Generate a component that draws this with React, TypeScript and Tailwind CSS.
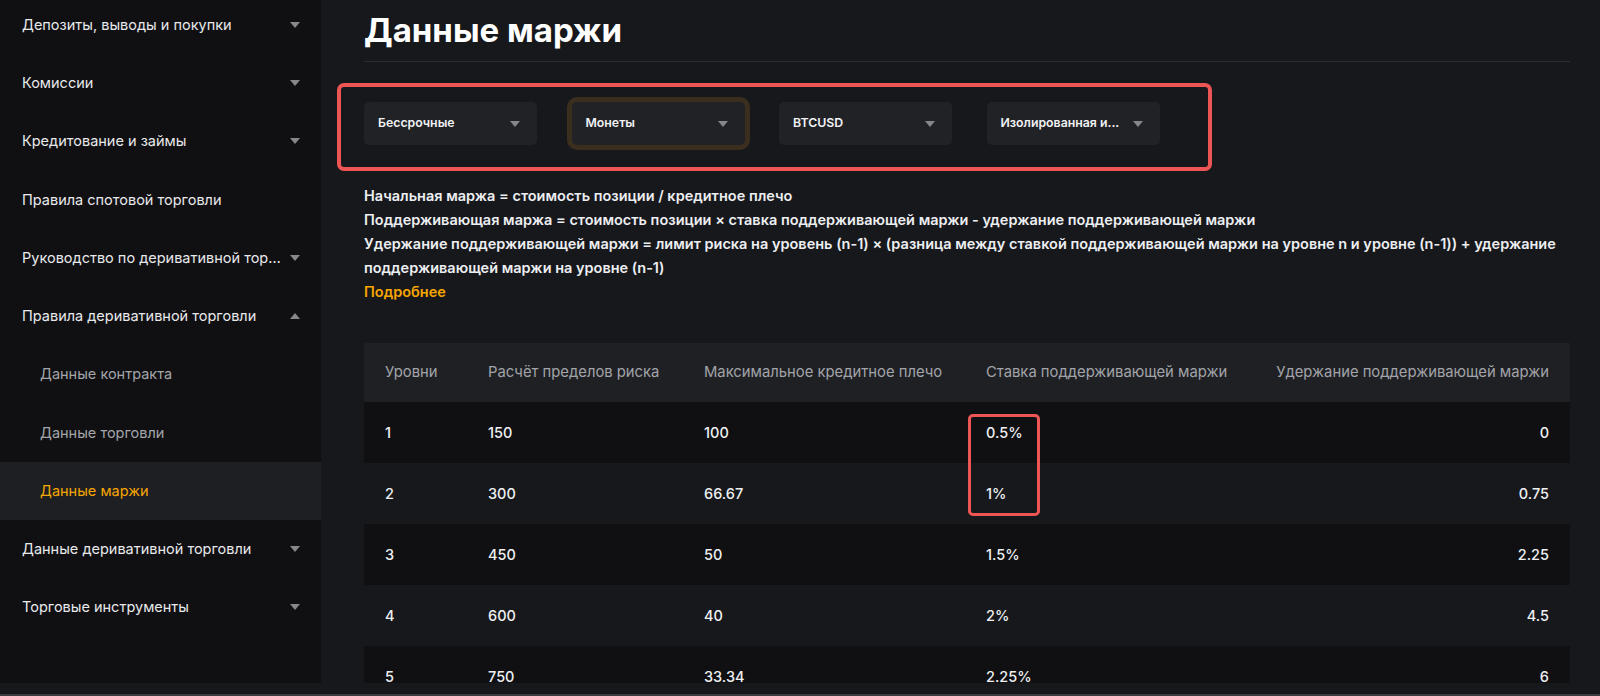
import React from "react";

const Caret = ({ up = false }: { up?: boolean }) => (
  <svg width="10" height="6" viewBox="0 0 10 6" className="shrink-0">
    {up ? <path d="M0 6 L5 0 L10 6 Z" fill="#85878c" /> : <path d="M0 0 L10 0 L5 6 Z" fill="#85878c" />}
  </svg>
);

type NavItem = { label: string; kind: "parent" | "sub" | "active"; caret?: "down" | "up" };

const nav: NavItem[] = [
  { label: "Депозиты, выводы и покупки", kind: "parent", caret: "down" },
  { label: "Комиссии", kind: "parent", caret: "down" },
  { label: "Кредитование и займы", kind: "parent", caret: "down" },
  { label: "Правила спотовой торговли", kind: "parent" },
  { label: "Руководство по деривативной торговле", kind: "parent", caret: "down" },
  { label: "Правила деривативной торговли", kind: "parent", caret: "up" },
  { label: "Данные контракта", kind: "sub" },
  { label: "Данные торговли", kind: "sub" },
  { label: "Данные маржи", kind: "active" },
  { label: "Данные деривативной торговли", kind: "parent", caret: "down" },
  { label: "Торговые инструменты", kind: "parent", caret: "down" },
];

const rows = [
  ["1", "150", "100", "0.5%", "0"],
  ["2", "300", "66.67", "1%", "0.75"],
  ["3", "450", "50", "1.5%", "2.25"],
  ["4", "600", "40", "2%", "4.5"],
  ["5", "750", "33.34", "2.25%", "6"],
];

const Dropdown = ({ label, focused = false }: { label: string; focused?: boolean }) => (
  <div
    className={
      "w-[173px] h-[43px] shrink-0 rounded-[5px] bg-[#212226] flex items-center justify-between pl-[14px] pr-[17px] " +
      (focused ? "shadow-[0_0_0_5px_#3a2e1e]" : "")
    }
  >
    <span className="text-[12.3px] font-semibold text-[#f1f2f4] whitespace-nowrap">{label}</span>
    <Caret />
  </div>
);

export default function App() {
  return (
    <div className="w-[1600px] h-[696px] bg-[#17181c] flex flex-col overflow-hidden font-['Inter',sans-serif]">
      <div className="h-[683px] flex overflow-hidden">
        <aside className="w-[321px] shrink-0 bg-[#101013] overflow-hidden">
          <div className="-mt-[4.5px]">
            {nav.map((it, i) => (
              <div
                key={i}
                className={
                  "h-[58.25px] flex items-center justify-between pr-[21px] " +
                  (it.kind === "parent" ? "pl-[22px]" : "pl-[40px]") +
                  (it.kind === "active" ? " bg-[#1e1f23]" : "")
                }
              >
                <span
                  className={
                    "text-[14.5px] truncate pr-[6px] " +
                    (it.kind === "parent"
                      ? "text-[#e8e9eb]"
                      : it.kind === "sub"
                      ? "text-[#a3a5a9]"
                      : "text-[#f7a600]")
                  }
                >
                  {it.label}
                </span>
                {it.caret && <Caret up={it.caret === "up"} />}
              </div>
            ))}
          </div>
        </aside>
        <main className="flex-1 pl-[43px] pr-[30px] overflow-hidden">
          <div className="pt-[9px] pb-[9px] border-b border-[#2c2d31]">
            <h1 className="text-[33px] leading-[43px] font-bold text-white">Данные маржи</h1>
          </div>
          <div className="mt-[21px] -ml-[27px] w-[875px] h-[88px] border-[4px] border-[#ee5555] rounded-[7px] pl-[23px] pt-[15px] flex gap-[34.5px]">
            <Dropdown label="Бессрочные" />
            <Dropdown label="Монеты" focused />
            <Dropdown label="BTCUSD" />
            <Dropdown label="Изолированная и..." />
          </div>
          <div className="mt-[13px] text-[14.5px] leading-[24px] font-semibold text-[#eceef1]">
            <div className="whitespace-nowrap">Начальная маржа = стоимость позиции / кредитное плечо</div>
            <div className="whitespace-nowrap">
              Поддерживающая маржа = стоимость позиции × ставка поддерживающей маржи - удержание поддерживающей маржи
            </div>
            <div className="whitespace-nowrap">
              Удержание поддерживающей маржи = лимит риска на уровень (n-1) × (разница между ставкой поддерживающей маржи на уровне n и уровне (n-1)) + удержание
            </div>
            <div className="whitespace-nowrap">поддерживающей маржи на уровне (n-1)</div>
            <div className="text-[#f7a600]">Подробнее</div>
          </div>
          <div className="mt-[39px] w-[1206px] relative">
            <div className="h-[59px] bg-[#1f2024] grid grid-cols-[103px_216px_282px_288px_1fr] items-center px-[21px] text-[14.8px] text-[#a2a4a9]">
              <div>Уровни</div>
              <div>Расчёт пределов риска</div>
              <div>Максимальное кредитное плечо</div>
              <div>Ставка поддерживающей маржи</div>
              <div className="text-right whitespace-nowrap">Удержание поддерживающей маржи</div>
            </div>
            {rows.map((r, i) => (
              <div
                key={i}
                className={
                  "h-[61px] grid grid-cols-[103px_216px_282px_288px_1fr] items-center px-[21px] text-[14.5px] font-medium text-[#eef0f2] " +
                  (i % 2 === 0 ? "bg-[#101013]" : "bg-[#17181c]")
                }
              >
                <div>{r[0]}</div>
                <div>{r[1]}</div>
                <div>{r[2]}</div>
                <div>{r[3]}</div>
                <div className="text-right">{r[4]}</div>
              </div>
            ))}
            <div className="absolute left-[604px] top-[71px] w-[72px] h-[102px] border-[3px] border-[#ee5555] rounded-[5px]" />
          </div>
        </main>
      </div>
      <div className="flex-1" />
      <div className="h-[2px] bg-[#3b3c40]" />
    </div>
  );
}
